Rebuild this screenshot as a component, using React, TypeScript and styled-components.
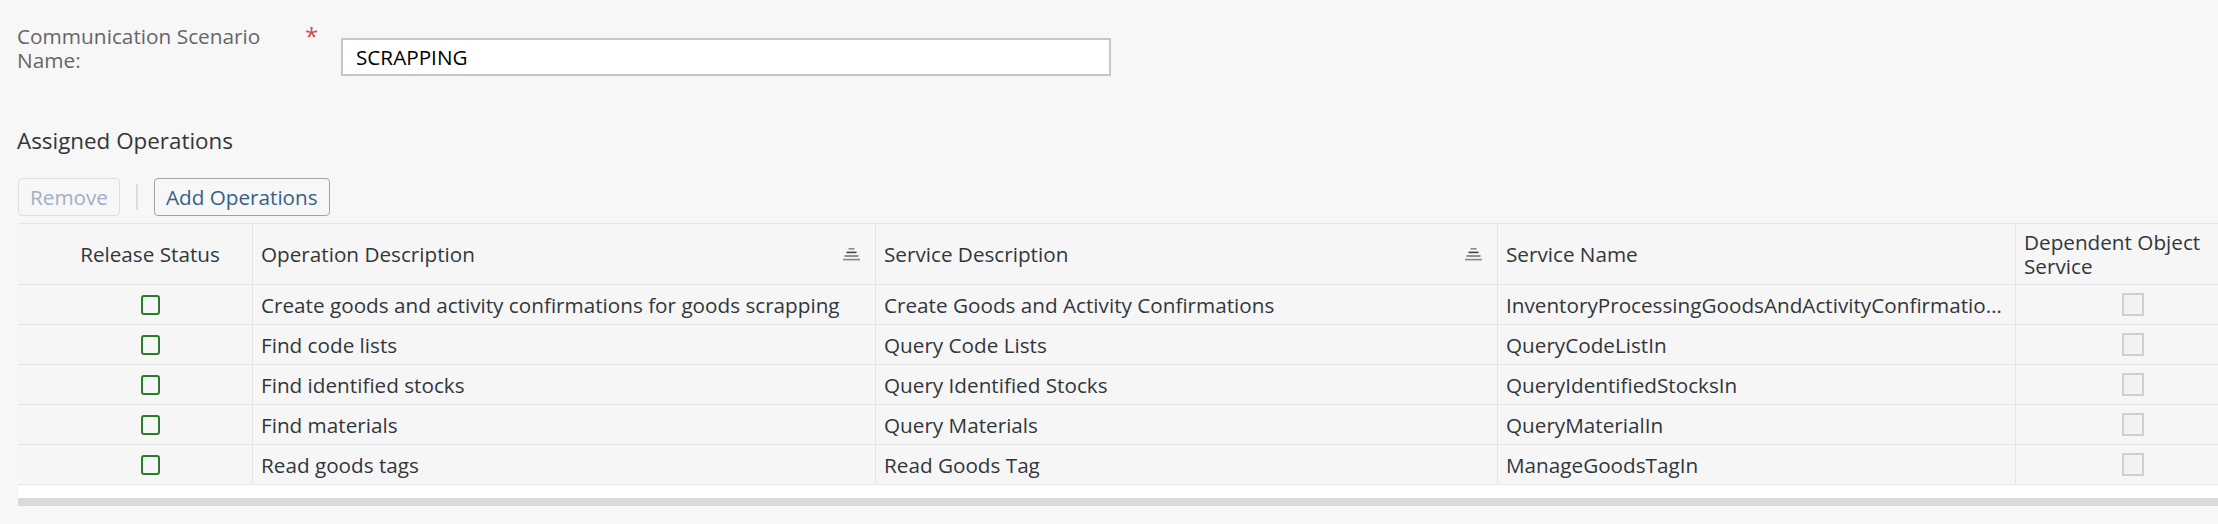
import React from 'react';
import styled, { createGlobalStyle } from 'styled-components';

interface Operation {
  id: string;
  description: string;
  serviceDescription: string;
  serviceName: string;
}

const operations: Operation[] = [
  {
    id: '1',
    description: 'Create goods and activity confirmations for goods scrapping',
    serviceDescription: 'Create Goods and Activity Confirmations',
    serviceName: 'InventoryProcessingGoodsAndActivityConfirmationIn',
  },
  { id: '2', description: 'Find code lists', serviceDescription: 'Query Code Lists', serviceName: 'QueryCodeListIn' },
  {
    id: '3',
    description: 'Find identified stocks',
    serviceDescription: 'Query Identified Stocks',
    serviceName: 'QueryIdentifiedStocksIn',
  },
  { id: '4', description: 'Find materials', serviceDescription: 'Query Materials', serviceName: 'QueryMaterialIn' },
  { id: '5', description: 'Read goods tags', serviceDescription: 'Read Goods Tag', serviceName: 'ManageGoodsTagIn' },
];

// Fiori-ish palette
const colors = {
  page: '#f7f7f7',
  text: '#32363a',
  label: '#666666',
  border: '#e5e5e5',
  required: '#c0504d',
  accept: '#2b7d2b',
  link: '#346187',
};

const font = "'Open Sans', 'Liberation Sans', Arial, sans-serif";
const textSize = '20.7px';

const GlobalStyle = createGlobalStyle`
  html, body {
    margin: 0;
    padding: 0;
    overflow: hidden;
    background: ${colors.page};
    font-family: ${font};
    color: ${colors.text};
  }
`;

const Page = styled.div`
  width: 2218px;
  height: 524px;
  background: ${colors.page};
  overflow: hidden;
`;

const FormRow = styled.div`
  display: flex;
  align-items: flex-start;
  padding: 24px 0 0 17px;
`;

const Label = styled.label`
  width: 272px;
  font-size: 20.8px;
  line-height: 24px;
  color: ${colors.label};
`;

const RequiredMark = styled.span`
  width: 36px;
  margin-left: 16px;
  font-size: 24px;
  line-height: 24px;
  color: ${colors.required};
`;

const TextInput = styled.div`
  box-sizing: border-box;
  width: 770px;
  height: 38px;
  margin-top: 14px;
  padding: 0 13px;
  display: flex;
  align-items: center;
  background: #ffffff;
  border: 2px solid #c6c6c6;
  font-size: ${textSize};
  color: #000000;
`;

const SectionTitle = styled.h2`
  margin: 51px 0 0 17px;
  font-size: 22.4px;
  line-height: 28px;
  font-weight: 400;
  color: ${colors.text};
`;

const Toolbar = styled.div`
  display: flex;
  align-items: center;
  gap: 16px;
  margin: 23px 0 0 18px;
  height: 38px;
`;

const Button = styled.button<{ $disabled?: boolean }>`
  box-sizing: border-box;
  height: 38px;
  padding: 0 11px;
  border-radius: 4px;
  background: ${colors.page};
  border: 1.5px solid ${({ $disabled }) => ($disabled ? '#dadfe4' : '#a3a3a3')};
  color: ${({ $disabled }) => ($disabled ? '#9db1c5' : colors.link)};
  font-family: ${font};
  font-size: ${textSize};
`;

const ToolbarSeparator = styled.span`
  width: 2px;
  height: 26px;
  background: #dcdcdc;
`;

const TableWrap = styled.div`
  margin: 7px 0 0 18px;
  overflow: hidden;
`;

const Grid = styled.div`
  display: grid;
  grid-template-columns: 235px 623px 622px 518px 204px;
  width: 2202px;
  border-top: 1px solid ${colors.border};
  background: #f6f6f6;
`;

const HeaderCell = styled.div<{ $center?: boolean; $last?: boolean }>`
  box-sizing: border-box;
  height: 61px;
  display: flex;
  align-items: center;
  justify-content: ${({ $center }) => ($center ? 'center' : 'space-between')};
  padding: ${({ $center }) => ($center ? '0 0 0 30px' : '0 15px 0 8px')};
  border-bottom: 1px solid ${colors.border};
  border-right: ${({ $last }) => ($last ? 'none' : `1px solid ${colors.border}`)};
  font-size: ${textSize};
  line-height: 24px;
  color: ${colors.text};
  white-space: nowrap;
`;

const Cell = styled.div<{ $center?: boolean; $last?: boolean }>`
  box-sizing: border-box;
  height: 40px;
  display: flex;
  align-items: center;
  justify-content: ${({ $center }) => ($center ? 'center' : 'flex-start')};
  padding: ${({ $center }) => ($center ? '0 0 0 30px' : '0 10px 0 8px')};
  border-bottom: 1px solid ${colors.border};
  border-right: ${({ $last }) => ($last ? 'none' : `1px solid ${colors.border}`)};
  font-size: ${textSize};
  color: ${colors.text};
  min-width: 0;
`;

const CellText = styled.span`
  white-space: nowrap;
  overflow: hidden;
  text-overflow: ellipsis;
`;

const StatusBox = styled.span`
  box-sizing: border-box;
  width: 19px;
  height: 20px;
  border: 2.5px solid ${colors.accept};
  border-radius: 3px;
`;

const DisabledCheck = styled.span`
  box-sizing: border-box;
  width: 22px;
  height: 23px;
  border: 2px solid #cfcfcf;
  background: #f2f2f2;
`;

const ScrollArea = styled.div`
  height: 13px;
  background: #ffffff;
`;

const ScrollBar = styled.div`
  height: 8px;
  background: #dadada;
`;

const SortIcon = () => (
  <svg width="17" height="13" viewBox="0 0 17 13" aria-hidden>
    <rect x="5.5" y="0" width="6" height="1.6" fill="#8a8a8a" />
    <rect x="3.5" y="3.6" width="10" height="1.6" fill="#444" />
    <rect x="1.5" y="7.2" width="14" height="1.6" fill="#777" />
    <rect x="0" y="10.8" width="17" height="1.6" fill="#888" />
  </svg>
);

const App: React.FC = () => {
  return (
    <Page>
      <GlobalStyle />
      <FormRow>
        <Label>Communication Scenario Name:</Label>
        <RequiredMark>*</RequiredMark>
        <TextInput>SCRAPPING</TextInput>
      </FormRow>

      <SectionTitle>Assigned Operations</SectionTitle>

      <Toolbar>
        <Button $disabled>Remove</Button>
        <ToolbarSeparator />
        <Button>Add Operations</Button>
      </Toolbar>

      <TableWrap>
        <Grid>
          <HeaderCell $center>Release Status</HeaderCell>
          <HeaderCell>
            Operation Description
            <SortIcon />
          </HeaderCell>
          <HeaderCell>
            Service Description
            <SortIcon />
          </HeaderCell>
          <HeaderCell>Service Name</HeaderCell>
          <HeaderCell $last>
            Dependent Object
            <br />
            Service
          </HeaderCell>

          {operations.map((op) => (
            <React.Fragment key={op.id}>
              <Cell $center>
                <StatusBox />
              </Cell>
              <Cell>
                <CellText>{op.description}</CellText>
              </Cell>
              <Cell>
                <CellText>{op.serviceDescription}</CellText>
              </Cell>
              <Cell>
                <CellText title={op.serviceName}>{op.serviceName}</CellText>
              </Cell>
              <Cell $center $last>
                <DisabledCheck />
              </Cell>
            </React.Fragment>
          ))}
        </Grid>
        <ScrollArea />
        <ScrollBar />
      </TableWrap>
    </Page>
  );
};

export default App;
